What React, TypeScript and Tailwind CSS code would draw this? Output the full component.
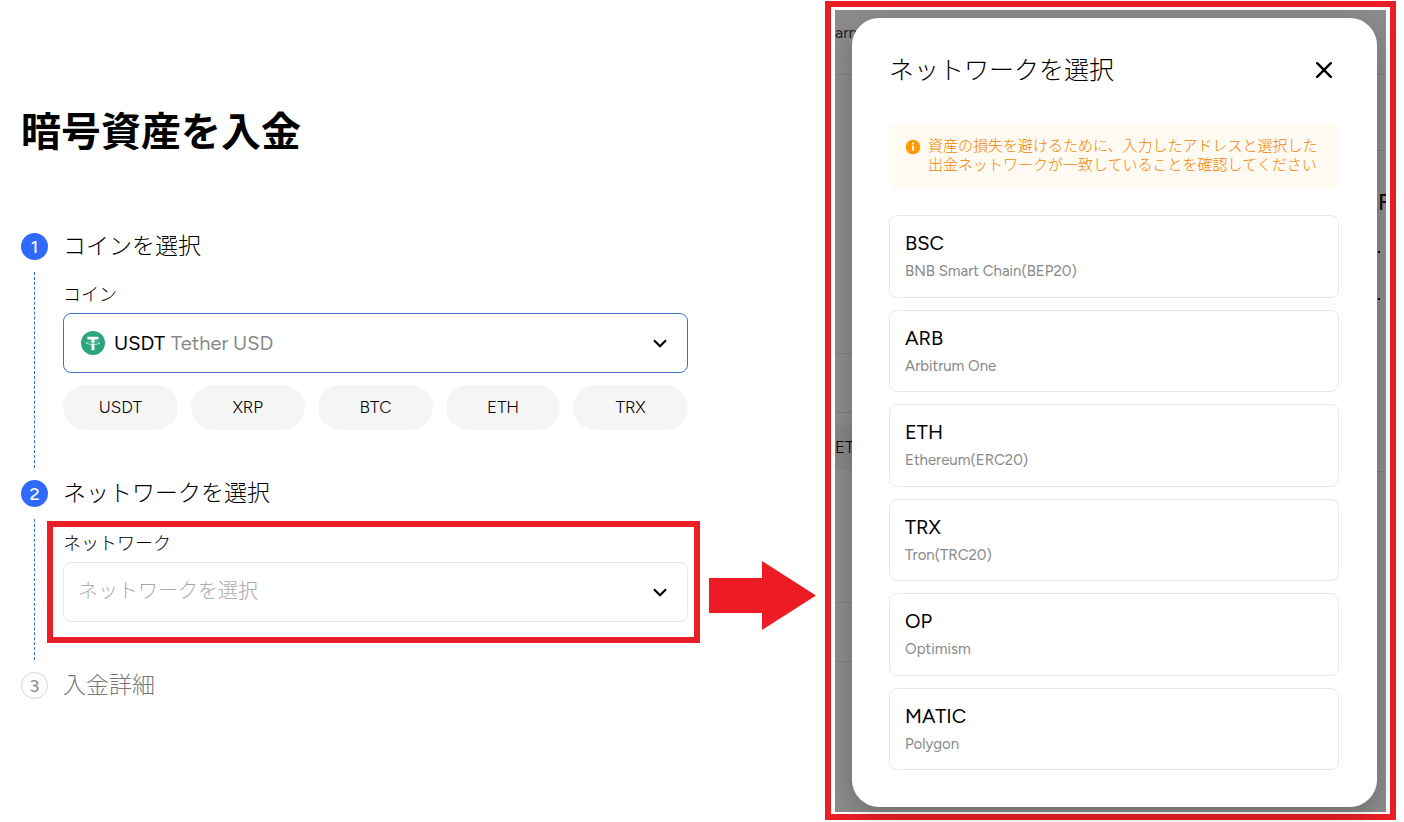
import { useState } from 'react';
import type { ReactNode } from 'react';

const COINS = ['USDT', 'XRP', 'BTC', 'ETH', 'TRX'];

const NETWORKS = [
  { id: 'BSC', name: 'BNB Smart Chain(BEP20)' },
  { id: 'ARB', name: 'Arbitrum One' },
  { id: 'ETH', name: 'Ethereum(ERC20)' },
  { id: 'TRX', name: 'Tron(TRC20)' },
  { id: 'OP', name: 'Optimism' },
  { id: 'MATIC', name: 'Polygon' },
];

const COIN_NAMES: Record<string, string> = {
  USDT: 'Tether USD',
  XRP: 'Ripple',
  BTC: 'Bitcoin',
  ETH: 'Ethereum',
  TRX: 'Tron',
};

function TetherIcon() {
  return (
    <svg viewBox="0 0 32 32" className="size-6 shrink-0" aria-hidden="true">
      <circle cx="16" cy="16" r="16" fill="#2aa57d" />
      <path
        fill="#fff"
        d="M17.922 17.383v-.002c-.11.008-.677.042-1.942.042-1.01 0-1.721-.03-1.971-.042v.003c-3.888-.171-6.79-.848-6.79-1.658 0-.809 2.902-1.486 6.79-1.66v2.644c.254.018.982.061 1.988.061 1.207 0 1.812-.05 1.925-.06v-2.643c3.88.173 6.775.85 6.775 1.658 0 .81-2.895 1.485-6.775 1.657m0-3.59v-2.366h5.414V7.819H8.595v3.608h5.414v2.365c-4.4.202-7.709 1.074-7.709 2.118 0 1.044 3.309 1.915 7.709 2.118v7.582h3.913v-7.584c4.393-.202 7.694-1.073 7.694-2.116 0-1.043-3.301-1.914-7.694-2.117"
      />
    </svg>
  );
}

function Chevron() {
  return (
    <svg viewBox="0 0 14 9" className="h-[9px] w-3.5 shrink-0" fill="none" aria-hidden="true">
      <path d="M1 1.2 7 7.2 13 1.2" stroke="#000" strokeWidth="2.2" />
    </svg>
  );
}

function InfoIcon() {
  return (
    <svg viewBox="0 0 16 16" className="mt-0.5 size-4 shrink-0" aria-hidden="true">
      <circle cx="8" cy="8" r="7.3" fill="#ff9a05" />
      <circle cx="8" cy="4.6" r="1.1" fill="#fff" />
      <rect x="7.1" y="6.8" width="1.8" height="5" fill="#fff" />
    </svg>
  );
}

interface StepProps {
  number: number;
  title: string;
  pending?: boolean;
  children?: ReactNode;
}

function Step({ number, title, pending, children }: StepProps) {
  return (
    <li className="flex gap-[15px]">
      <div className="flex w-[27px] shrink-0 flex-col items-center gap-3">
        <span
          className={
            pending
              ? 'flex size-[27px] items-center justify-center rounded-full border border-[#d5d5d5] text-lg text-[#888]'
              : 'flex size-[27px] items-center justify-center rounded-full bg-[#3069fe] text-lg font-medium text-white'
          }
        >
          {number}
        </span>
        {!pending && <span className="mb-3 flex-1 border-l border-dashed border-[#3069d8]" />}
      </div>
      <div className="min-w-0 flex-1">
        <h2
          className={
            pending
              ? 'text-[23px] leading-[26px] font-light text-[#777]'
              : 'text-[23px] leading-[26px] font-light text-black'
          }
        >
          {title}
        </h2>
        {children}
      </div>
    </li>
  );
}

/** Dimmed page that shows around the dialog */
function Backdrop() {
  return (
    <div className="absolute inset-0 overflow-hidden bg-[#8b8b8b]" aria-hidden="true">
      <p className="absolute top-3 left-0 text-base leading-[22px] text-[#222]">arn</p>
      <div className="absolute top-16 w-full border-t border-[#7c7c7c]" />
      <div className="absolute top-[140px] right-0 w-10 border-t border-[#7c7c7c]" />
      <div className="absolute top-[343px] w-10 border-t border-[#7c7c7c]" />
      <div className="absolute top-[402px] w-10 border-t border-[#7c7c7c]" />
      <div className="absolute top-[415px] flex h-[45px] w-10 items-center bg-[#858585] text-[17px] font-light text-black">
        ETH
      </div>
      <div className="absolute top-[461px] right-0 w-10 border-t border-[#7c7c7c]" />
      <div className="absolute top-[592px] w-10 border-t border-[#7c7c7c]" />
      <div className="absolute top-[651px] w-10 border-t border-[#7c7c7c]" />
      <div className="absolute top-[178px] right-0 w-2 text-[23px] leading-7 text-black">F</div>
      <div className="absolute top-[241px] right-1.5 size-0.5 bg-black" />
      <div className="absolute top-[288px] right-1.5 size-0.5 bg-black" />
    </div>
  );
}

function NetworkDialog({ onSelect }: { onSelect: (id: string) => void }) {
  return (
    <section
      role="dialog"
      aria-labelledby="network-dialog-title"
      className="relative flex flex-1 flex-col rounded-[27px] bg-white py-[37px] pr-[38px] pl-[37px] shadow-[0_8px_24px_rgba(0,0,0,0.2)]"
    >
      <header className="flex h-[30px] items-center justify-between">
        <h2 id="network-dialog-title" className="text-[25px] leading-[30px] font-light text-black">
          ネットワークを選択
        </h2>
        <button type="button" aria-label="閉じる" className="flex size-[30px] items-center justify-center">
          <svg viewBox="0 0 16 16" className="size-4" aria-hidden="true">
            <path d="M1.2 1.2 14.8 14.8M14.8 1.2 1.2 14.8" stroke="#000" strokeWidth="2.4" strokeLinecap="round" />
          </svg>
        </button>
      </header>

      <div className="mt-[38px] flex gap-[7px] rounded-lg bg-[#fffaf2] py-3.5 pl-4">
        <InfoIcon />
        <p className="text-[15px] leading-[19px] font-light text-[#f08400]">
          資産の損失を避けるために、入力したアドレスと選択した
          <br />
          出金ネットワークが一致していることを確認してください
        </p>
      </div>

      <ul className="mt-[26px] flex flex-1 flex-col gap-3">
        {NETWORKS.map((n) => (
          <li key={n.id} className="flex flex-1">
            <button
              type="button"
              onClick={() => onSelect(n.id)}
              className="flex w-full flex-col justify-center gap-1 rounded-lg border border-[#e8e8e8] px-[15px] pt-3 pb-3.5 text-left"
            >
              <span className="text-xl leading-7 text-black">{n.id}</span>
              <span className="text-[15px] leading-5 text-[#888]">{n.name}</span>
            </button>
          </li>
        ))}
      </ul>
    </section>
  );
}

export default function App() {
  const [coin, setCoin] = useState('USDT');
  const [network, setNetwork] = useState('');

  return (
    <div className="grid min-h-screen grid-cols-[minmax(0,700fr)_107px_minmax(0,571fr)] gap-[9px] bg-white pt-px pr-2 pb-0.5 font-['Figtree',Inter,'Noto_Sans_CJK_JP',sans-serif]">
      <main className="pl-[21px]">
        <h1 className="mt-[101px] text-[40px] leading-[60px] font-bold text-black">暗号資産を入金</h1>

        <ol className="mt-[71px]">
          <Step number={1} title="コインを選択">
            <div className="pr-3 pb-[50px]">
              <label htmlFor="coin" className="mt-6 mb-1.5 block text-lg leading-6 font-light text-black">
                コイン
              </label>
              <div className="flex h-[60px] items-center rounded-lg border border-[#4070c8] pr-5 pl-[17px]">
                <TetherIcon />
                <select
                  id="coin"
                  value={coin}
                  onChange={(e) => setCoin(e.target.value)}
                  className="ml-[9px] field-sizing-content appearance-none text-xl text-black outline-none"
                >
                  {COINS.map((c) => (
                    <option key={c}>{c}</option>
                  ))}
                </select>
                <span className="ml-1.5 flex-1 text-xl text-[#888]">{COIN_NAMES[coin]}</span>
                <Chevron />
              </div>
              <div className="mt-3 flex gap-[13px]">
                {COINS.map((c) => (
                  <button
                    key={c}
                    type="button"
                    onClick={() => setCoin(c)}
                    className="h-[45px] flex-1 rounded-full bg-[#f5f5f5] text-[17px] font-light text-black"
                  >
                    {c}
                  </button>
                ))}
              </div>
            </div>
          </Step>

          <Step number={2} title="ネットワークを選択">
            <div className="mt-[15px] mb-[29px] -ml-4 border-6 border-[#e81f26] pt-[5px] pr-1.5 pb-[15px] pl-2.5">
              <label htmlFor="network" className="mb-1.5 block text-lg leading-6 font-light text-black">
                ネットワーク
              </label>
              <div className="relative flex items-center">
                <select
                  id="network"
                  value={network}
                  onChange={(e) => setNetwork(e.target.value)}
                  className="h-[60px] w-full appearance-none rounded-lg border border-[#e8e8e8] pr-12 pb-0.5 pl-3.5 text-xl font-light text-[#aaa] outline-none"
                >
                  <option value="">ネットワークを選択</option>
                  {NETWORKS.map((n) => (
                    <option key={n.id} value={n.id}>
                      {n.id}
                    </option>
                  ))}
                </select>
                <span className="pointer-events-none absolute right-[21px]">
                  <Chevron />
                </span>
              </div>
            </div>
          </Step>

          <Step number={3} title="入金詳細" pending />
        </ol>
      </main>

      <svg viewBox="0 0 107 69" className="mt-[560px] w-full" aria-hidden="true">
        <path d="M0 17H53V0L107 34.500 53 69V52H0Z" fill="#ed1c24" />
      </svg>

      <aside className="flex border-6 border-[#e81f26] px-1 pt-[3px] pb-0.5">
        <div className="relative flex flex-1 pt-2 pr-[9px] pb-[5px] pl-[17px]">
          <Backdrop />
          <NetworkDialog onSelect={setNetwork} />
        </div>
      </aside>
    </div>
  );
}
